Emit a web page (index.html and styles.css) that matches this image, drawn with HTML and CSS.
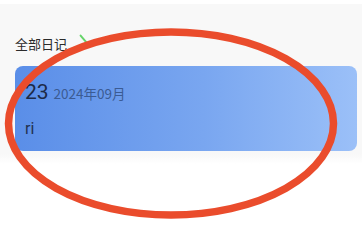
FILE: index.html
```html
<!DOCTYPE html>
<html lang="zh">
<head>
<meta charset="utf-8">
<link rel="stylesheet" href="styles.css">
</head>
<body>
<div class="page">
  <div class="topbar"></div>
  <div class="content">
    <div class="section-title">
      <span class="title">全部日记</span>
      <span class="tick"></span>
    </div>
    <div class="card">
      <div class="card-date">
        <span class="day">23</span>
        <span class="month">2024年09月</span>
      </div>
      <div class="card-text">ri</div>
    </div>
  </div>
  <svg class="annot" width="362" height="236" viewBox="0 0 362 236">
    <ellipse cx="171" cy="123.5" rx="162.5" ry="91.5" fill="none" stroke="#ea4c2c" stroke-width="7.5"/>
  </svg>
</div>
</body>
</html>
```
FILE: styles.css
```css
* { box-sizing: border-box; }
html, body { margin: 0; padding: 0; }
body {
  width: 362px;
  height: 236px;
  overflow: hidden;
  background: #fdfdfd;
  font-family: "Noto Sans CJK SC", "Noto Sans", sans-serif;
}
.page {
  position: relative;
  width: 362px;
  height: 236px;
}
.topbar {
  height: 4px;
  background: #ffffff;
}
.content {
  background: linear-gradient(#f8f8f8, #f8f8f8 150px, #ffffff 160px);
  height: 232px;
  padding: 29px 5px 0 15px;
}
.section-title {
  display: flex;
  align-items: center;
  height: 22px;
}
.title {
  font-size: 13px;
  color: #2b2b2b;
  line-height: 22px;
}
.tick {
  width: 11px;
  height: 2px;
  background: #66d46a;
  border-radius: 1px;
  transform: rotate(50deg);
  margin-left: 11px;
  margin-top: -11px;
}
.card {
  margin-top: 11px;
  height: 85px;
  border-radius: 8px;
  background: linear-gradient(90deg, #5a8ee8 0%, #79a6f0 55%, #9bc0f8 100%);
  padding: 14px 10px 0 10px;
}
.card-date {
  display: flex;
  align-items: baseline;
  gap: 5px;
}
.day {
  font-family: "Roboto", "Noto Sans", sans-serif;
  font-size: 21px;
  color: #1c2a47;
  line-height: 24px;
}
.month {
  font-size: 13.5px;
  color: #3b5b93;
}
.card-text {
  margin-top: 16px;
  font-family: "Roboto", "Noto Sans", sans-serif;
  font-size: 16px;
  color: #23314f;
  line-height: 18px;
}
.annot {
  position: absolute;
  left: 0;
  top: 0;
  pointer-events: none;
}
```
